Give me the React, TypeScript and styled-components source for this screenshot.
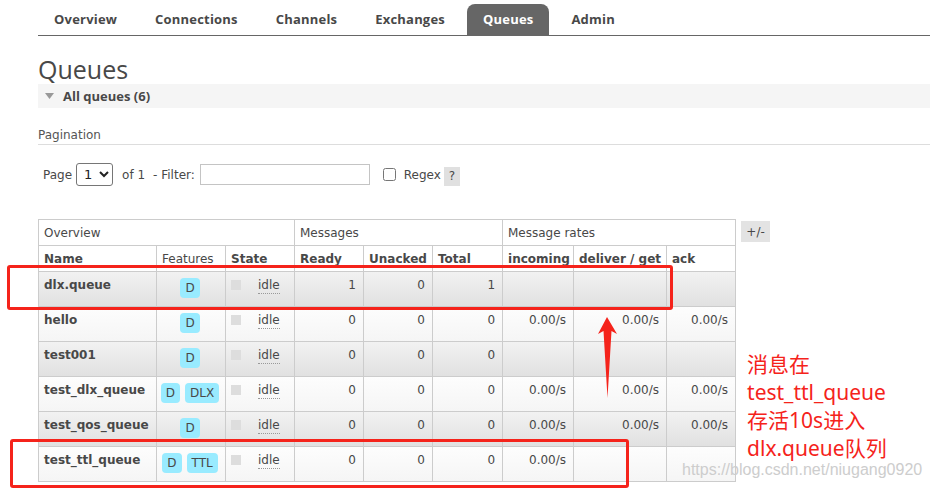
import React from 'react';
import styled, { createGlobalStyle } from 'styled-components';

const Global = createGlobalStyle`
  html, body { margin: 0; padding: 0; background: #fff; }
  body {
    font-family: "DejaVu Sans", Verdana, sans-serif;
    font-size: 12px;
    color: #484848;
  }
`;

const Page = styled.div`
  position: relative;
  width: 930px;
  height: 490px;
  overflow: hidden;
  padding-left: 38px;
  box-sizing: border-box;
`;

const Nav = styled.ul`
  list-style: none;
  margin: 0;
  padding: 4px 0 0;
  height: 31px;
  display: flex;
  gap: 6px;
  border-bottom: 1px solid #666;
`;

const Tab = styled.li<{ $active?: boolean }>`
  padding: 0 16px;
  line-height: 31px;
  font-family: "Open Sans", "DejaVu Sans", sans-serif;
  font-weight: 700;
  font-size: 13px;
  letter-spacing: 0.2px;
  color: ${(p) => (p.$active ? '#fff' : '#484848')};
  background: ${(p) => (p.$active ? '#666' : 'transparent')};
  border-radius: 8px 8px 0 0;
`;

const Title = styled.h1`
  margin: 18px 0 0;
  height: 30px;
  line-height: 31px;
  font-family: "Open Sans", "DejaVu Sans", sans-serif;
  font-weight: 400;
  font-size: 25px;
  color: #484848;
`;

const SectionBar = styled.div`
  height: 24px;
  background: #f5f5f5;
  display: flex;
  align-items: center;
  gap: 9px;
  padding-left: 7px;
  font-family: "Open Sans", "DejaVu Sans", sans-serif;
  font-weight: 700;
  font-size: 13px;
  color: #484848;
`;

const SubLabel = styled.div`
  margin-top: 19px;
  line-height: 16px;
  padding-bottom: 1px;
  border-bottom: 1px solid #ddd;
  color: #555;
`;

const Controls = styled.div`
  margin-top: 18px;
  height: 23px;
  display: flex;
  align-items: center;
  padding-left: 5px;
`;

const CtrlText = styled.span<{ $ml?: number }>`
  margin-left: ${(p) => p.$ml ?? 0}px;
  white-space: pre;
`;

const PageSelect = styled.select`
  margin-left: 4px;
  width: 37px;
  height: 23px;
  font-family: "DejaVu Sans", sans-serif;
  font-size: 13px;
  color: #222;
  border: 1px solid #767676;
  border-radius: 3px;
  background: #fff;
  padding: 0 0 0 3px;
`;

const FilterInput = styled.input`
  margin-left: 5px;
  width: 170px;
  height: 21px;
  box-sizing: border-box;
  border: 1px solid #c4c4c4;
  padding: 0 3px;
`;

const Check = styled.input`
  margin: 0 0 0 13px;
  width: 13px;
  height: 13px;
`;

const Help = styled.span`
  margin-left: 3px;
  width: 16px;
  height: 19px;
  margin-top: 3px;
  display: inline-flex;
  align-items: center;
  justify-content: center;
  background: #e0e0e0;
  color: #484848;
`;

const TableArea = styled.div`
  margin-top: 33px;
  display: flex;
  align-items: flex-start;
`;

const Table = styled.table`
  border-collapse: collapse;
  table-layout: fixed;
  width: 698px;
  font-size: 12px;
  color: #484848;
`;

const HeadRow = styled.tr`
  height: 26px;
  background: #fff;
`;

const HeadCell = styled.th<{ $bold?: boolean }>`
  border: 1px solid #ccc;
  padding: 4px 5px 3px;
  line-height: 18px;
  text-align: left;
  vertical-align: top;
  font-weight: ${(p) => (p.$bold ? 700 : 400)};
  white-space: nowrap;
  overflow: hidden;
`;

const BodyRow = styled.tr<{ $alt: boolean }>`
  height: 35px;
  background: ${(p) =>
    p.$alt
      ? 'linear-gradient(#f2f2f2, #e0e0e0)'
      : 'linear-gradient(#fdfdfd, #f5f5f5)'};
`;

const Cell = styled.td<{ $align?: 'left' | 'right' | 'center'; $bold?: boolean }>`
  border: 1px solid #ccc;
  padding: 4px 7px 0 5px;
  line-height: 18px;
  vertical-align: top;
  text-align: ${(p) => p.$align ?? 'left'};
  font-weight: ${(p) => (p.$bold ? 700 : 400)};
  white-space: nowrap;
  overflow: hidden;
`;

const Badges = styled.div`
  display: flex;
  justify-content: center;
  gap: 5px;
  margin-top: 2px;
`;

const Badge = styled.span`
  display: inline-block;
  height: 20px;
  line-height: 20px;
  padding: 0 5px;
  border-radius: 4px;
  background: #99ebff;
  color: #484848;
`;

const StateBox = styled.div`
  display: flex;
  align-items: flex-start;
`;

const StateDot = styled.span`
  width: 10px;
  height: 10px;
  margin-top: 4px;
  background: #ddd;
  flex: none;
`;

const StateText = styled.abbr`
  margin-left: 17px;
  text-decoration: none;
  border-bottom: 1px dotted #999;
  line-height: 16px;
  margin-top: 1px;
`;

const SideColumn = styled.div`
  margin-left: 5px;
  display: flex;
  flex-direction: column;
`;

const ToggleButton = styled.span`
  margin-top: 2px;
  width: 29px;
  height: 21px;
  display: flex;
  align-items: center;
  justify-content: center;
  background: #e3e3e3;
  color: #484848;
`;

const Note = styled.div`
  margin-top: 108px;
  padding-left: 6px;
  font-family: "Noto Sans", "Noto Sans CJK SC", sans-serif;
  font-size: 21px;
  line-height: 28px;
  color: #f5231b;
  white-space: nowrap;
`;

const RedBox = styled.div<{ $l: number; $t: number; $w: number; $h: number }>`
  position: absolute;
  left: ${(p) => p.$l}px;
  top: ${(p) => p.$t}px;
  width: ${(p) => p.$w}px;
  height: ${(p) => p.$h}px;
  box-sizing: border-box;
  border: 3px solid #f5231b;
  border-radius: 3px;
  pointer-events: none;
`;

const Arrow = styled.svg`
  position: absolute;
  left: 590px;
  top: 310px;
`;

const Watermark = styled.div`
  position: absolute;
  left: 682px;
  top: 461px;
  font-family: "Liberation Sans", Arial, sans-serif;
  font-size: 16px;
  color: #cdcdcd;
  white-space: nowrap;
`;

type Row = {
  name: string;
  features: string[];
  ready: string;
  unacked: string;
  total: string;
  incoming: string;
  deliver: string;
  ack: string;
};

const rows: Row[] = [
  { name: 'dlx.queue', features: ['D'], ready: '1', unacked: '0', total: '1', incoming: '', deliver: '', ack: '' },
  { name: 'hello', features: ['D'], ready: '0', unacked: '0', total: '0', incoming: '0.00/s', deliver: '0.00/s', ack: '0.00/s' },
  { name: 'test001', features: ['D'], ready: '0', unacked: '0', total: '0', incoming: '', deliver: '', ack: '' },
  { name: 'test_dlx_queue', features: ['D', 'DLX'], ready: '0', unacked: '0', total: '0', incoming: '0.00/s', deliver: '0.00/s', ack: '0.00/s' },
  { name: 'test_qos_queue', features: ['D'], ready: '0', unacked: '0', total: '0', incoming: '0.00/s', deliver: '0.00/s', ack: '0.00/s' },
  { name: 'test_ttl_queue', features: ['D', 'TTL'], ready: '0', unacked: '0', total: '0', incoming: '0.00/s', deliver: '', ack: '' },
];

const colWidths = [118, 69, 69, 69, 69, 70, 71, 93, 69];

const tabs = ['Overview', 'Connections', 'Channels', 'Exchanges', 'Queues', 'Admin'];

export default function App() {
  return (
    <Page>
      <Global />
      <Nav>
        {tabs.map((t) => (
          <Tab key={t} $active={t === 'Queues'}>
            {t}
          </Tab>
        ))}
      </Nav>
      <Title>Queues</Title>
      <SectionBar>
        <svg width="9" height="6" viewBox="0 0 9 6">
          <polygon points="0,0 9,0 4.5,6" fill="#999" />
        </svg>
        <span>All queues (6)</span>
      </SectionBar>
      <SubLabel>Pagination</SubLabel>
      <Controls>
        <CtrlText>Page</CtrlText>
        <PageSelect defaultValue="1">
          <option value="1">1</option>
        </PageSelect>
        <CtrlText $ml={9}>of 1</CtrlText>
        <CtrlText $ml={8}>- Filter:</CtrlText>
        <FilterInput type="text" />
        <Check type="checkbox" />
        <CtrlText $ml={8}>Regex</CtrlText>
        <Help>?</Help>
      </Controls>
      <TableArea>
        <Table>
          <colgroup>
            {colWidths.map((w, i) => (
              <col key={i} style={{ width: w }} />
            ))}
          </colgroup>
          <thead>
            <HeadRow>
              <HeadCell colSpan={3}>Overview</HeadCell>
              <HeadCell colSpan={3}>Messages</HeadCell>
              <HeadCell colSpan={3}>Message rates</HeadCell>
            </HeadRow>
            <HeadRow>
              <HeadCell $bold>Name</HeadCell>
              <HeadCell>Features</HeadCell>
              <HeadCell $bold>State</HeadCell>
              <HeadCell $bold>Ready</HeadCell>
              <HeadCell $bold>Unacked</HeadCell>
              <HeadCell $bold>Total</HeadCell>
              <HeadCell $bold>incoming</HeadCell>
              <HeadCell $bold>deliver / get</HeadCell>
              <HeadCell $bold>ack</HeadCell>
            </HeadRow>
          </thead>
          <tbody>
            {rows.map((r, i) => (
              <BodyRow key={r.name} $alt={i % 2 === 0}>
                <Cell $bold>{r.name}</Cell>
                <Cell $align="center">
                  <Badges>
                    {r.features.map((f) => (
                      <Badge key={f}>{f}</Badge>
                    ))}
                  </Badges>
                </Cell>
                <Cell>
                  <StateBox>
                    <StateDot />
                    <StateText title="idle">idle</StateText>
                  </StateBox>
                </Cell>
                <Cell $align="right">{r.ready}</Cell>
                <Cell $align="right">{r.unacked}</Cell>
                <Cell $align="right">{r.total}</Cell>
                <Cell $align="right">{r.incoming}</Cell>
                <Cell $align="right">{r.deliver}</Cell>
                <Cell $align="right">{r.ack}</Cell>
              </BodyRow>
            ))}
          </tbody>
        </Table>
        <SideColumn>
          <ToggleButton>+/-</ToggleButton>
          <Note>
            消息在
            <br />
            test_ttl_queue
            <br />
            存活10s进入
            <br />
            dlx.queue队列
          </Note>
        </SideColumn>
      </TableArea>

      <RedBox $l={7} $t={265} $w={666} $h={45} />
      <RedBox $l={10} $t={439} $w={619} $h={49} />
      <Arrow width="36" height="95" viewBox="590 310 36 95">
        <polygon
          points="607,317 617,334 611.5,331 607.5,398 603.5,331 598,334"
          fill="#f5231b"
        />
      </Arrow>
      <Watermark>https://blog.csdn.net/niugang0920</Watermark>
    </Page>
  );
}
